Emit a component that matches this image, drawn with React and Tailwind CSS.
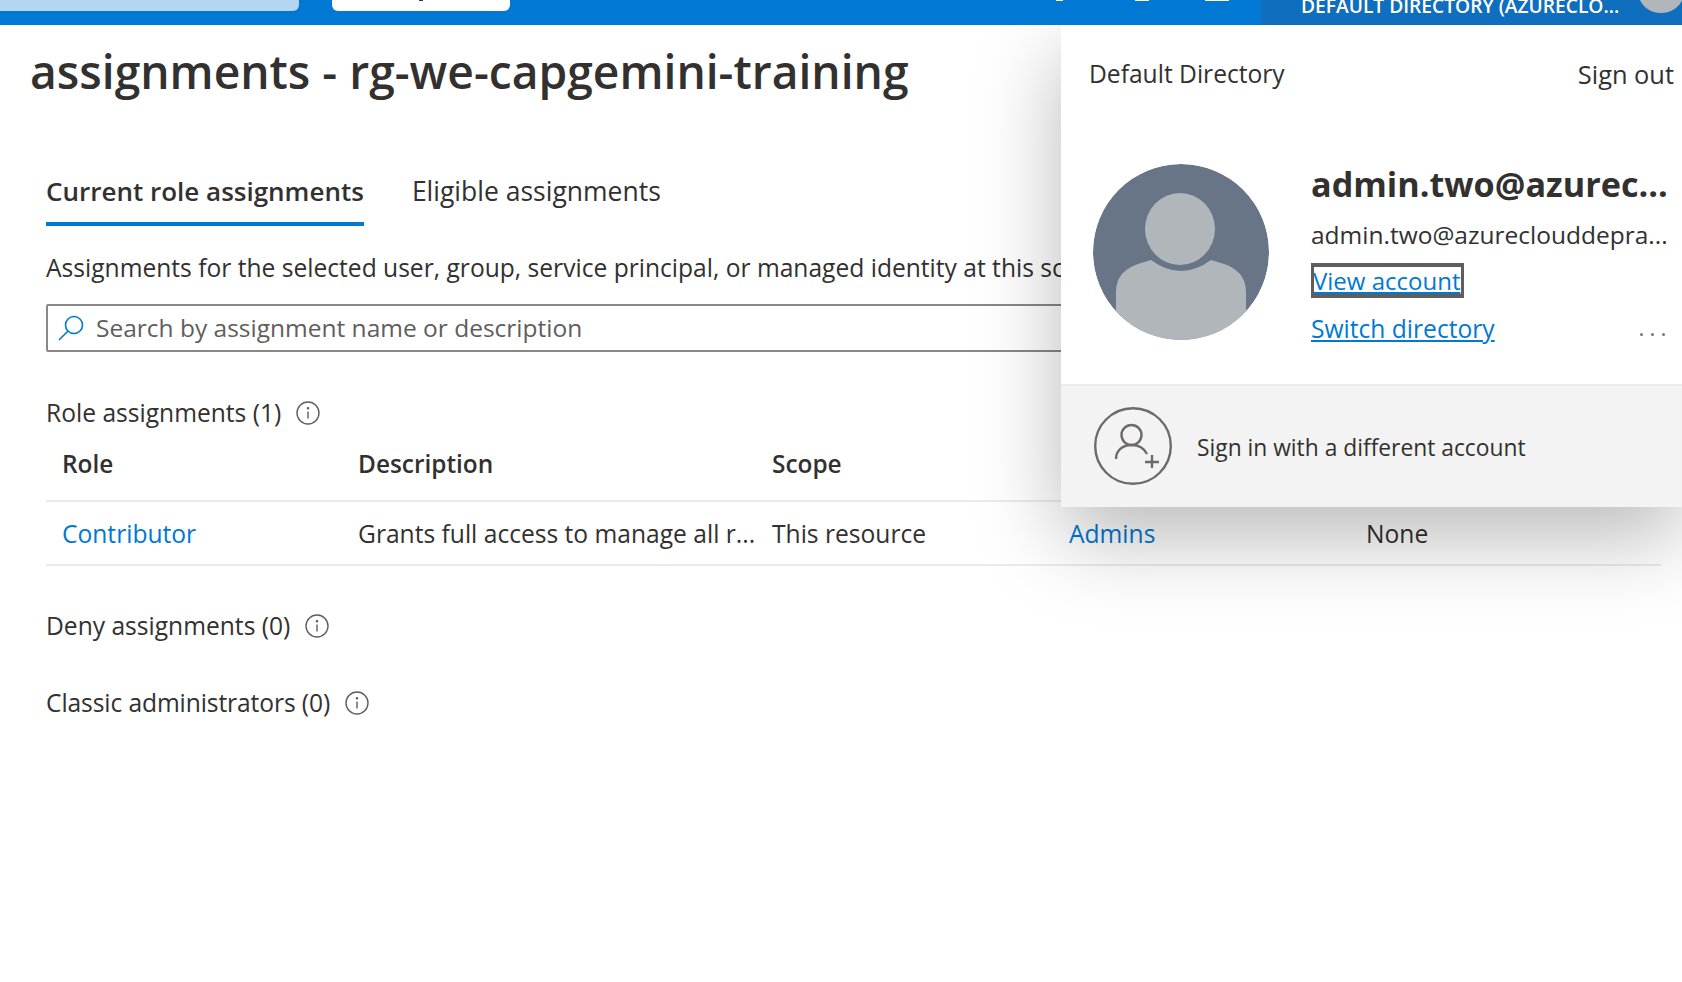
import React from "react";

const font = { fontFamily: '"Open Sans", "Noto Sans", sans-serif' };

const InfoIcon = () => (
  <svg width="24" height="24" viewBox="0 0 24 24" fill="none" stroke="#605e5c" strokeWidth="1.4">
    <circle cx="12" cy="12" r="11" />
    <path d="M12 10.5v7" />
    <circle cx="12" cy="7.2" r="0.6" fill="#605e5c" />
  </svg>
);

const SectionTitle = ({ children, className }) => (
  <div className={`flex items-center gap-[15px] text-[24.6px] leading-8 text-[#323130] ${className}`}>
    <span>{children}</span>
    <InfoIcon />
  </div>
);

const Avatar = () => (
  <svg width="176" height="176" viewBox="0 0 176 176" className="shrink-0 rounded-full">
    <circle cx="88" cy="88" r="88" fill="#677586" />
    <path
      d="M23 176V128Q23 106 48 99L58 96Q88 118 118 96L128 99Q153 106 153 128V176Z"
      fill="#b1b6bb"
    />
    <ellipse cx="87" cy="65" rx="35" ry="36" fill="#b1b6bb" />
  </svg>
);

const AddAccountIcon = () => (
  <svg width="78" height="78" viewBox="0 0 78 78" fill="none" stroke="#6d6b6a" strokeWidth="2.4" className="-mt-[2px]">
    <circle cx="39" cy="39" r="37.8" />
    <circle cx="37.5" cy="28" r="10" />
    <path d="M22 52C22 43 29 38 37.5 38C44 38 50 41 53 47" />
    <path d="M58 48v13M51 55h14" />
  </svg>
);

const AccountPanel = () => (
  <div className="absolute right-0 top-[25px] h-[482px] w-[621px] bg-white flex flex-col shadow-[0_30px_80px_0_rgba(0,0,0,0.28)]">
    <div className="flex justify-between pl-7 pr-2 pt-[33px] text-[24.6px] leading-8 text-[#323130]">
      <span>Default Directory</span>
      <span className="text-[25.4px]">Sign out</span>
    </div>
    <div className="flex flex-1 pl-8 pr-[15px] pt-[74px]">
      <Avatar />
      <div className="ml-[42px] flex-1 min-w-0">
        <div className="-mt-[3px] whitespace-nowrap text-[34.2px] leading-[46px] font-bold text-[#323130]">
          admin.two@azurec...
        </div>
        <div className="mt-3 whitespace-nowrap text-[24.5px] leading-8 text-[#323130]">
          admin.two@azureclouddepra...
        </div>
        <a className="mt-3 block w-[153px] h-[35px] border-x-[3px] border-y-4 border-[#605e5c] text-[24px] leading-[28px] -indent-px text-[#0078d4] underline whitespace-nowrap overflow-hidden">
          View account
        </a>
        <div className="mt-[15px] flex justify-between items-center">
          <a className="text-[24.6px] leading-8 text-[#0078d4] underline">Switch directory</a>
          <span className="mr-[2px] flex gap-2 pt-[10px]">
            <i className="w-[3px] h-[3px] rounded-full bg-[#797775]" />
            <i className="w-[3px] h-[3px] rounded-full bg-[#797775]" />
            <i className="w-[3px] h-[3px] rounded-full bg-[#797775]" />
          </span>
        </div>
      </div>
    </div>
    <div className="h-[123px] shrink-0 bg-[#f3f3f3] border-t-2 border-[#edebe9] flex items-center pl-[33px] gap-[25px]">
      <AddAccountIcon />
      <span className="pt-[3px] text-[22.8px] text-[#323130]">Sign in with a different account</span>
    </div>
  </div>
);

const Row = ({ cells, className }) => (
  <div className={`grid grid-cols-[296px_414px_297px_297px_1fr] items-center pl-4 ${className}`}>
    {cells}
  </div>
);

export default function App() {
  return (
    <div style={font} className="relative h-[982px] w-[1682px] overflow-hidden bg-white text-[#323130]">
      <header className="relative z-10 flex h-[25px] bg-[#0078d4]">
        <div className="h-[11px] w-[299px] rounded-br-md bg-[#b3d7f2]" />
        <div className="ml-[33px] flex h-[11px] w-[178px] justify-center rounded-b-md bg-white">
          <i className="h-[1px] w-1 bg-[#243a5e]" />
        </div>
        <div className="ml-auto flex h-[1px] items-start pr-8">
          <i className="h-[1px] w-[7px] bg-white" />
          <i className="ml-[72px] h-[1px] w-[14px] bg-white" />
          <i className="ml-14 h-[1px] w-6 bg-white" />
        </div>
        <div className="flex h-[25px] w-[421px] items-start overflow-hidden bg-[#106ebe] pl-10">
          <span className="-mt-[8px] whitespace-nowrap text-[19.2px] leading-7 font-semibold text-white">
            DEFAULT DIRECTORY (AZURECLO...
          </span>
          <span className="absolute -top-[31px] right-[-2px] h-[44px] w-[46px] rounded-full bg-[#b1b6bb]" />
        </div>
      </header>

      <main className="pl-[30px] pr-[21px]">
        <h1 className="mt-4 text-[46.2px] leading-[62px] font-semibold text-[#323130]">
          assignments - rg-we-capgemini-training
        </h1>
        <div className="pl-4">
          <div className="mt-[70px] flex gap-12 text-[26px] leading-9">
            <div className="h-[53px] border-b-4 border-[#0078d4] font-semibold">Current role assignments</div>
            <div className="text-[26.5px]">Eligible assignments</div>
          </div>
          <p className="mt-[26px] text-[24.6px] leading-8 whitespace-nowrap">
            Assignments for the selected user, group, service principal, or managed identity at this scope.
          </p>
          <div className="mt-[20px] flex h-[48px] items-center gap-3 rounded-[2px] border-2 border-[#8a8886] pl-[10px]">
            <svg width="26" height="26" viewBox="0 0 26 26" fill="none" stroke="#0078d4" strokeWidth="1.6">
              <circle cx="16" cy="10" r="8.5" />
              <path d="M10 16L1 25" />
            </svg>
            <span className="text-[24.5px] text-[#605e5c]">Search by assignment name or description</span>
          </div>
          <SectionTitle className="mt-[45px]">Role assignments (1)</SectionTitle>
          <Row
            className="h-[73px] border-b-2 border-[#edebe9] font-semibold text-[24.4px]"
            cells={
              <>
                <span>Role</span>
                <span>Description</span>
                <span>Scope</span>
              </>
            }
          />
          <Row
            className="h-[64px] border-b-2 border-[#edebe9] pt-[2px] text-[24.6px]"
            cells={
              <>
                <a className="text-[#0078d4]">Contributor</a>
                <span className="whitespace-nowrap">Grants full access to manage all r...</span>
                <span>This resource</span>
                <a className="text-[#0078d4]">Admins</a>
                <span>None</span>
              </>
            }
          />
          <SectionTitle className="mt-11">Deny assignments (0)</SectionTitle>
          <SectionTitle className="mt-[45px] tracking-[-0.1px]">Classic administrators (0)</SectionTitle>
        </div>
      </main>
      <AccountPanel />
    </div>
  );
}
